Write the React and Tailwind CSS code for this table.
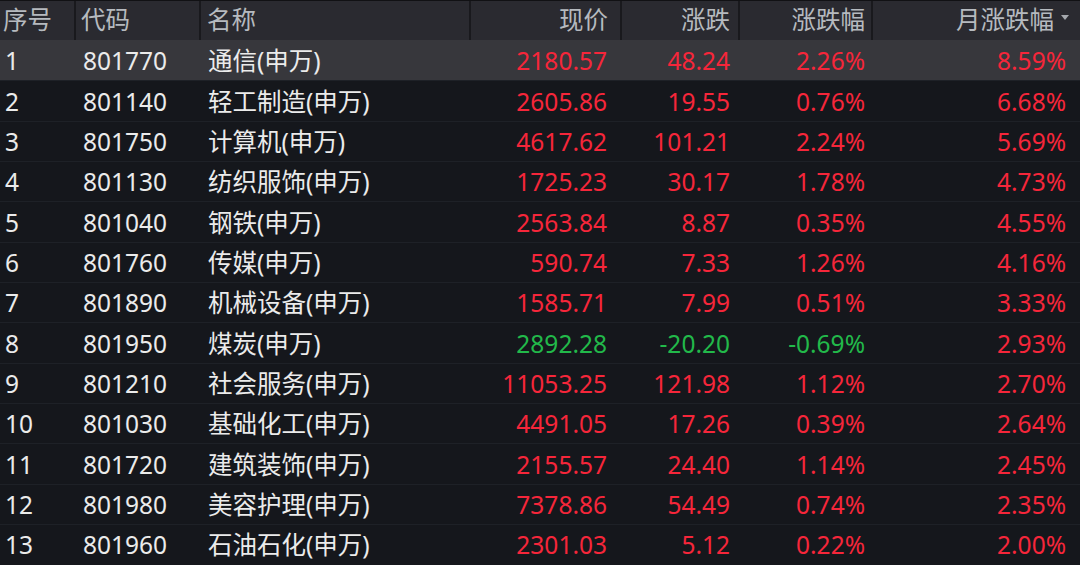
const rows = [
  ['1', '801770', '通信(申万)', '2180.57', '48.24', '2.26%', '8.59%'],
  ['2', '801140', '轻工制造(申万)', '2605.86', '19.55', '0.76%', '6.68%'],
  ['3', '801750', '计算机(申万)', '4617.62', '101.21', '2.24%', '5.69%'],
  ['4', '801130', '纺织服饰(申万)', '1725.23', '30.17', '1.78%', '4.73%'],
  ['5', '801040', '钢铁(申万)', '2563.84', '8.87', '0.35%', '4.55%'],
  ['6', '801760', '传媒(申万)', '590.74', '7.33', '1.26%', '4.16%'],
  ['7', '801890', '机械设备(申万)', '1585.71', '7.99', '0.51%', '3.33%'],
  ['8', '801950', '煤炭(申万)', '2892.28', '-20.20', '-0.69%', '2.93%'],
  ['9', '801210', '社会服务(申万)', '11053.25', '121.98', '1.12%', '2.70%'],
  ['10', '801030', '基础化工(申万)', '4491.05', '17.26', '0.39%', '2.64%'],
  ['11', '801720', '建筑装饰(申万)', '2155.57', '24.40', '1.14%', '2.45%'],
  ['12', '801980', '美容护理(申万)', '7378.86', '54.49', '0.74%', '2.35%'],
  ['13', '801960', '石油石化(申万)', '2301.03', '5.12', '0.22%', '2.00%'],
];

const cols = 'grid grid-cols-[76px_125px_270px_151px_118px_133px_207px]';

function HeaderCell({ children, className = '' }) {
  return (
    <div className={`flex items-center h-full border-r-2 border-[#19191d] ${className}`}>
      {children}
    </div>
  );
}

export default function App() {
  return (
    <div
      className="w-[1080px] h-[565px] bg-[#15171c] overflow-hidden text-[24.5px] leading-none"
      style={{ fontFamily: '"Noto Sans", "Noto Sans CJK SC", sans-serif' }}
    >
      {/* Header */}
      <div className={`${cols} h-[40px] bg-[#2a2a30] border-t border-[#111114] text-[#b6babf]`}>
        <HeaderCell className="pl-[3px]">序号</HeaderCell>
        <HeaderCell className="pl-[5px]">代码</HeaderCell>
        <HeaderCell className="pl-[6px]">名称</HeaderCell>
        <HeaderCell className="justify-end pr-[12px]">现价</HeaderCell>
        <HeaderCell className="justify-end pr-[8px]">涨跌</HeaderCell>
        <HeaderCell className="justify-end pr-[6px]">涨跌幅</HeaderCell>
        <div className="flex items-center justify-end h-full pr-[11px]">
          月涨跌幅
          <span className="ml-[7px] mt-[-6px] w-0 h-0 border-l-[4px] border-r-[4px] border-t-[5px] border-l-transparent border-r-transparent border-t-[#a5a8ad]" />
        </div>
      </div>

      {/* Rows */}
      {rows.map((r, i) => {
        const down = r[4].startsWith('-');
        const col = down ? 'text-[#22b94a]' : 'text-[#f6263a]';
        return (
          <div
            key={r[0]}
            className={`${cols} h-[40.33px] items-center pt-[2px] ${
              i === 0 ? 'bg-[#37373c]' : 'border-t border-[#1e2127]'
            }`}
          >
            <div className="pl-[5px] text-[#ebebeb]">{r[0]}</div>
            <div className="pl-[7px] text-[#ebebeb]">{r[1]}</div>
            <div className="pl-[7px] text-[#ebebeb] whitespace-nowrap">{r[2]}</div>
            <div className={`text-right pr-[15px] ${col}`}>{r[3]}</div>
            <div className={`text-right pr-[10px] ${col}`}>{r[4]}</div>
            <div className={`text-right pr-[8px] ${col}`}>{r[5]}</div>
            <div className="text-right pr-[14px] text-[#f6263a]">{r[6]}</div>
          </div>
        );
      })}
    </div>
  );
}
